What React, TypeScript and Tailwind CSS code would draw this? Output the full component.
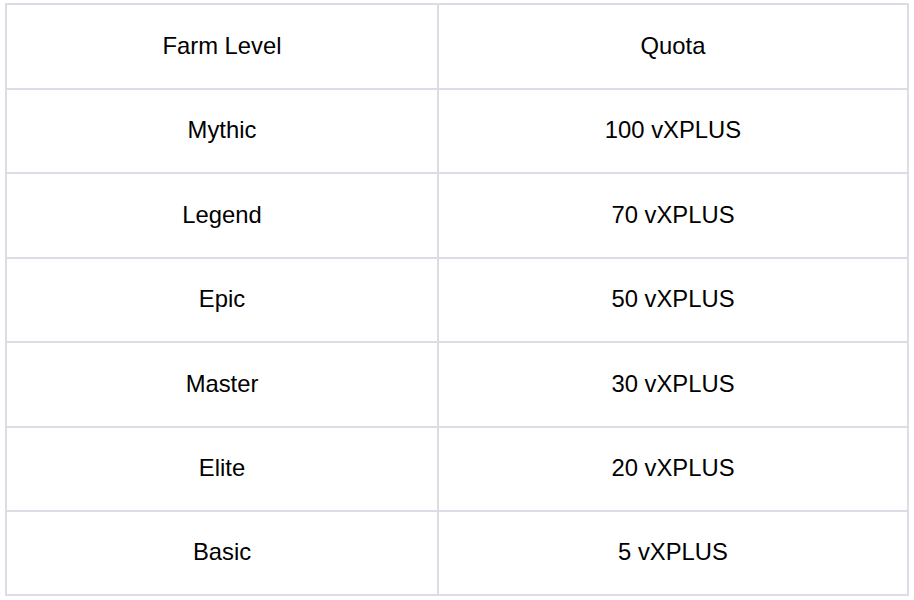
import React from "react";

const rows: [string, string, number][] = [
  ["Farm Level", "Quota", 83],
  ["Mythic", "100 vXPLUS", 82],
  ["Legend", "70 vXPLUS", 83],
  ["Epic", "50 vXPLUS", 82],
  ["Master", "30 vXPLUS", 83],
  ["Elite", "20 vXPLUS", 82],
  ["Basic", "5 vXPLUS", 82],
];

export default function App() {
  return (
    <div className="w-[914px] h-[600px] bg-white pl-[5px] pt-[3px]" style={{ fontFamily: '"Liberation Sans", Arial, sans-serif' }}>
      <div className="w-[904px] border-2 border-[#dcdce6] flex flex-col">
        {rows.map(([a, b, h], i) => (
          <div
            key={a}
            className={`flex ${i < rows.length - 1 ? "border-b-2 border-[#dcdce6]" : ""}`}
            style={{ height: h + (i < rows.length - 1 ? 2 : 0) }}
          >
            <div className="w-[430px] flex items-center justify-center pb-[2px] text-[23.8px] text-black border-r-2 border-[#dcdce6] box-content">
              {a}
            </div>
            <div className="flex-1 flex items-center justify-center pb-[2px] text-[23.8px] text-black">
              {b}
            </div>
          </div>
        ))}
      </div>
    </div>
  );
}
